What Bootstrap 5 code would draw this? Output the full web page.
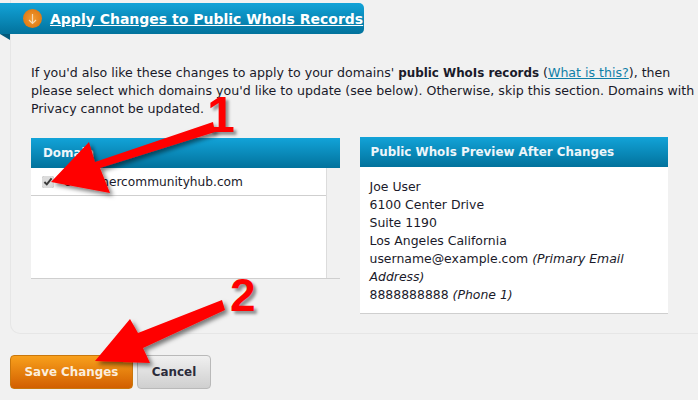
<!DOCTYPE html>
<html lang="en">
<head>
  <meta charset="UTF-8" />
  <meta name="viewport" content="width=device-width, initial-scale=1" />
  <title>Apply Changes to Public WhoIs Records</title>
  <link href="https://cdn.jsdelivr.net/npm/bootstrap@5.3.6/dist/css/bootstrap.min.css" rel="stylesheet"/>
  <style>
    body {
      background-color: #f1f1f1;
      font-family: "DejaVu Sans", Verdana, sans-serif;
      font-size: 12.4px;
      line-height: 18px;
      color: #1a1a2a;
      height: 400px;
      overflow: hidden;
    }
    .stage { width: 698px; height: 400px; }
    .panel-box {
      margin: 0 0 0 10px;
      height: 334px;
      padding: 64px 0 0 20px;
      border-left: 1px solid #e6e6e6;
      border-bottom: 1px solid #e6e6e6;
      border-bottom-left-radius: 10px;
      overflow: hidden;
    }
    .tab-head {
      top: 3px;
      left: 0;
      width: 364px;
      height: 31px;
      padding-left: 23px;
      gap: 8px;
      background: linear-gradient(#12a3d8, #02729c);
      border-top-right-radius: 5px;
      border-bottom-right-radius: 5px;
    }
    .tab-head a {
      color: #fff;
      font-size: 14px;
      font-weight: 700;
      white-space: nowrap;
    }
    .tab-fold {
      top: 34px;
      left: 0;
      width: 0;
      height: 0;
      border-top: 6px solid #035a7c;
      border-left: 10px solid transparent;
    }
    .tab-dot {
      width: 19px;
      height: 19px;
      border-radius: 50%;
      background: radial-gradient(#f29a33, #d96f08);
    }
    .intro { width: 680px; margin-bottom: 19px; font-size: 12.6px; }
    .intro b { font-size: 11.9px; }
    .intro a { color: #0f7fa8; }
    .col-domains { width: 309px; margin-top: 1px; border-bottom: 1px solid #cfcfcf; }
    .col-preview { width: 309px; margin-left: 20px; margin-right: 30px; }
    .box-title {
      height: 30px;
      padding-left: 11px;
      background: linear-gradient(#12a3d8, #02729c);
      color: #eef6fa;
      font-weight: 700;
      font-size: 11.9px;
      line-height: 30px;
    }
    .col-domains .box-title { padding-left: 12px; }
    .domain-list {
      height: 110px;
      width: 296px;
      background: #fff;
      border-right: 1px solid #dcdcdc;
    }
    .domain-row {
      height: 28px;
      border-bottom: 1px solid #cfcfcf;
      padding-left: 11px;
      gap: 10px;
      font-size: 12.2px;
    }
    .domain-row input { margin: 0; width: 12px; height: 12px; accent-color: #dcdcdc; }
    .preview-body {
      background: #fff;
      padding: 11px 10px 9px;
      border-bottom: 1px solid #cfcfcf;
      font-size: 12.45px;
    }
    .btn-save, .btn-quit {
      height: 34px;
      padding: 0;
      font-size: 11.9px;
      font-weight: 700;
      line-height: 32px;
      border-radius: 4px;
    }
    .btn-save {
      width: 123px;
      color: #fbeedd;
      background: linear-gradient(#f8a01c, #d25f00);
      border: 1px solid #c9770c;
    }
    .btn-quit {
      width: 74px;
      color: #2b2b3a;
      background: linear-gradient(#f0f0f0, #cfcfcf);
      border: 1px solid #b9b9b9;
    }
    .foot-row { padding: 21px 0 0 10px; gap: 4px; }
    .arrow-layer { top: 0; left: 0; pointer-events: none; }
    .call-num {
      color: #f00;
      font-family: "Liberation Sans", Arial, sans-serif;
      font-weight: 700;
      font-size: 46px;
      line-height: 46px;
      text-shadow: 3px 3px 3px rgba(0,0,0,.4);
    }
    .num-one { top: 90px; left: 207px; font-size: 50px; line-height: 50px; }
    .num-two { top: 272px; left: 230px; }
  </style>
</head>
<body>
  <div class="stage position-relative">

    <div class="tab-head position-absolute d-flex align-items-center">
      <span class="tab-dot d-flex align-items-center justify-content-center">
        <svg width="11" height="12" viewBox="0 0 11 12"><path d="M5.5 1v9M2 7l3.5 3.5L9 7" fill="none" stroke="#f8d9b0" stroke-width="1.2"/></svg>
      </span>
      <a href="#">Apply Changes to Public WhoIs Records</a>
    </div>
    <div class="tab-fold position-absolute"></div>

    <div class="panel-box">
      <p class="intro">If you'd also like these changes to apply to your domains' <b>public WhoIs records</b> (<a href="#">What is this?</a>), then please select which domains you'd like to update (see below). Otherwise, skip this section. Domains with Privacy cannot be updated.</p>
      <div class="d-flex align-items-start">
        <div class="col-domains">
          <div class="box-title">Domain</div>
          <div class="domain-list">
            <div class="domain-row d-flex align-items-center">
              <input type="checkbox" checked />
              <span>customercommunityhub.com</span>
            </div>
          </div>
        </div>
        <div class="col-preview">
          <div class="box-title">Public WhoIs Preview After Changes</div>
          <div class="preview-body">
            Joe User<br>
            6100 Center Drive<br>
            Suite 1190<br>
            Los Angeles California<br>
            username@example.com <i>(Primary Email Address)</i><br>
            8888888888 <i>(Phone 1)</i>
          </div>
        </div>
      </div>
    </div>

    <div class="foot-row d-flex">
      <button class="btn btn-save">Save Changes</button>
      <button class="btn btn-quit">Cancel</button>
    </div>

    <svg class="arrow-layer position-absolute" width="698" height="400" viewBox="0 0 698 400">
      <defs>
        <filter id="arrowShadow" x="-20%" y="-20%" width="150%" height="150%">
          <feDropShadow dx="3" dy="3" stdDeviation="2" flood-color="#000" flood-opacity=".5"/>
        </filter>
      </defs>
      <path filter="url(#arrowShadow)" fill="#f00" d="M213 122L215 132L100 168L110 193L51 182L89 142L95 162Z"/>
      <path filter="url(#arrowShadow)" fill="#f00" d="M222 300L225 310L143 348L150 363L95 361L130 319L138 333Z"/>
    </svg>
    <div class="call-num num-one position-absolute">1</div>
    <div class="call-num num-two position-absolute">2</div>
  </div>

  <script src="https://cdn.jsdelivr.net/npm/bootstrap@5.3.6/dist/js/bootstrap.bundle.min.js"></script>
</body>
</html>
